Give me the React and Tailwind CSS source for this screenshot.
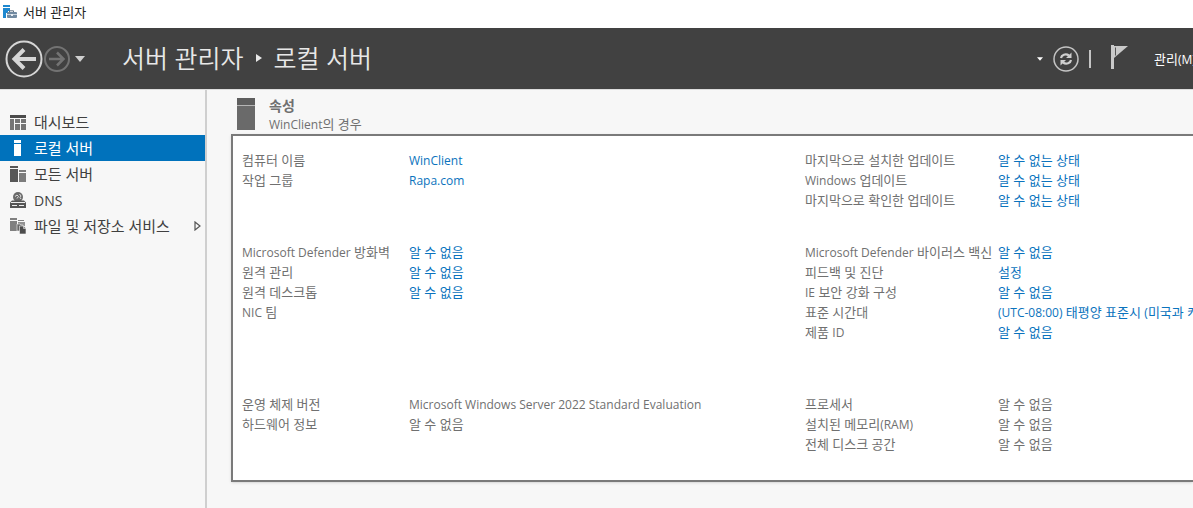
import clsx from "clsx";

const UNKNOWN = "알 수 없음";
const UNKNOWN_STATE = "알 수 없는 상태";

const navItems = [
  { label: "대시보드", icon: DashboardIcon },
  { label: "로컬 서버", icon: ServerIcon, active: true },
  { label: "모든 서버", icon: ServersIcon },
  { label: "DNS", icon: DnsIcon },
  { label: "파일 및 저장소 서비스", icon: StorageIcon, expandable: true },
];

const groups = [
  {
    className: "h-[92px]",
    left: [
      { label: "컴퓨터 이름", value: "WinClient", link: true },
      { label: "작업 그룹", value: "Rapa.com", link: true },
    ],
    right: [
      { label: "마지막으로 설치한 업데이트", value: UNKNOWN_STATE, link: true },
      { label: "Windows 업데이트", value: UNKNOWN_STATE, link: true },
      { label: "마지막으로 확인한 업데이트", value: UNKNOWN_STATE, link: true },
    ],
  },
  {
    className: "h-[152px]",
    left: [
      { label: "Microsoft Defender 방화벽", value: UNKNOWN, link: true },
      { label: "원격 관리", value: UNKNOWN, link: true },
      { label: "원격 데스크톱", value: UNKNOWN, link: true },
      { label: "NIC 팀", value: "" },
    ],
    right: [
      { label: "Microsoft Defender 바이러스 백신", value: UNKNOWN, link: true },
      { label: "피드백 및 진단", value: "설정", link: true },
      { label: "IE 보안 강화 구성", value: UNKNOWN, link: true },
      { label: "표준 시간대", value: "(UTC-08:00) 태평양 표준시 (미국과 캐나다)", link: true },
      { label: "제품 ID", value: UNKNOWN, link: true },
    ],
  },
  {
    className: "h-[86px]",
    left: [
      { label: "운영 체제 버전", value: "Microsoft Windows Server 2022 Standard Evaluation" },
      { label: "하드웨어 정보", value: UNKNOWN },
    ],
    right: [
      { label: "프로세서", value: UNKNOWN },
      { label: "설치된 메모리(RAM)", value: UNKNOWN },
      { label: "전체 디스크 공간", value: UNKNOWN },
    ],
  },
];

// Latin runs are set one size smaller than the Hangul around them
function Mixed({ text, size = "text-xs" }) {
  return text.split(/([\x21-\x7e]+(?: [\x21-\x7e]+)*)/).map((part, i) =>
    i % 2 ? (
      <span key={i} className={clsx("font-['Open_Sans',sans-serif]", size)}>
        {part}
      </span>
    ) : (
      part
    )
  );
}

function AppIcon() {
  return (
    <svg width="14" height="14" viewBox="0 0 14 14" aria-hidden="true">
      <path d="M0 0h7v2H0zM0 3h7v3H5v2H3v5H0z" fill="#1e88cf" />
      <path d="M6.5 7V5.8h4V7" fill="none" stroke="#5f7183" />
      <rect x="4" y="7" width="10" height="6" rx="1" fill="#7189a0" />
      <path d="M4 9.5h10" stroke="#c9d4de" />
      <path d="M8 9h2v2H8z" fill="#e8edf2" />
    </svg>
  );
}

function DashboardIcon() {
  return (
    <svg width="16" height="15" viewBox="0 0 16 15" aria-hidden="true">
      <path d="M0 0h16v3H0z" fill="#4b4b4b" />
      <path d="M0 4h4v11H0zM5 4h5v4H5zM11 4h5v4h-5zM5 9h5v6H5zM11 9h5v6h-5z" fill="#757575" />
    </svg>
  );
}

function ServerIcon() {
  return (
    <svg width="16" height="16" viewBox="0 0 16 16" aria-hidden="true">
      <path d="M4 0h7v3H4zM4 4h7v12H4z" fill="#fff" />
    </svg>
  );
}

function ServersIcon() {
  return (
    <svg width="16" height="16" viewBox="0 0 16 16" aria-hidden="true">
      <path d="M0 0h8v2H0zM0 3h8v13H0z" fill="#575757" />
      <path d="M9 4h7v2H9zM9 7h7v9H9z" fill="#7c7c7c" />
    </svg>
  );
}

function DnsIcon() {
  return (
    <svg width="16" height="16" viewBox="0 0 16 16" aria-hidden="true">
      <circle cx="8" cy="5" r="5" fill="#6b6b6b" />
      <path d="M5 4.5l2-1.500 1.500 1.500L7 6.500M9.500 2l1.500 2-1 1.500 1 1.500" fill="none" stroke="#dcdcdc" />
      <path d="M2 8.500h12l2 2V16H0v-5.500z" fill="#555" />
      <path d="M1 10.500h14M2 13.500h5M9 13.500h5" stroke="#eee" />
    </svg>
  );
}

function StorageIcon() {
  return (
    <svg width="17" height="16" viewBox="0 0 17 16" aria-hidden="true">
      <path d="M0 0h7v2H0zM0 3h7v10H0zM8 2h6v1H8z" fill="#808080" />
      <path d="M8 4h7v4H8z" fill="#929292" />
      <path d="M7 6h3l1 1h2v6H7z" fill="#666" stroke="#f7f7f7" strokeWidth=".6" />
      <path d="M9.500 8h4L16 10.500V16H9.500z" fill="#4c4c4c" stroke="#f7f7f7" strokeWidth=".6" />
      <path d="M13.500 8v2.500H16" fill="none" stroke="#ddd" strokeWidth=".7" />
    </svg>
  );
}

function BackIcon() {
  return (
    <svg width="38" height="38" viewBox="0 0 38 38" aria-hidden="true">
      <circle cx="19" cy="19" r="17.500" fill="none" stroke="#d6d6d6" strokeWidth="2" />
      <path d="M31 19H10M19 9.500L9.500 19l9.500 9.500" fill="none" stroke="#d6d6d6" strokeWidth="4" />
    </svg>
  );
}

function ForwardIcon() {
  return (
    <svg width="26" height="26" viewBox="0 0 26 26" aria-hidden="true">
      <circle cx="13" cy="13" r="12" fill="none" stroke="#737373" strokeWidth="2" />
      <path d="M5 13h14M13 6.500l6.500 6.500-6.500 6.500" fill="none" stroke="#737373" strokeWidth="2.500" />
    </svg>
  );
}

function RefreshIcon() {
  return (
    <svg width="26" height="26" viewBox="0 0 26 26" aria-hidden="true">
      <circle cx="13" cy="13" r="12" fill="none" stroke="#c4c4c4" strokeWidth="1.500" />
      <path d="M8 12c.5-3 4.500-5 8-2.500M18 14c-.5 3-4.500 5-8 2.500" fill="none" stroke="#d0d0d0" strokeWidth="2.200" />
      <path d="M18.500 6.500v5.500H13zM7.500 19.500V14H13z" fill="#d0d0d0" />
    </svg>
  );
}

function FlagIcon() {
  return (
    <svg width="17" height="24" viewBox="0 0 17 24" aria-hidden="true">
      <path d="M0 0h3v24H0z" fill="#c9c9c9" />
      <path d="M3 1h14L3 13z" fill="#c9c9c9" />
      <path d="M4.500 2.500v8" stroke="#555" />
    </svg>
  );
}

function Caret({ className }) {
  return (
    <svg viewBox="0 0 10 6" className={className} aria-hidden="true">
      <path d="M0 0h10L5 6z" fill="currentColor" />
    </svg>
  );
}

function Properties({ rows, labelClass }) {
  return (
    <dl>
      {rows.map((row) => (
        <div key={row.label} className="flex h-5 items-center">
          <dt className={clsx("shrink-0 text-[#707070]", labelClass)}>
            <Mixed text={row.label} />
          </dt>
          <dd className="text-[#707070]">
            {row.link ? (
              <a href="#" className="text-[#0b73bd] hover:underline">
                <Mixed text={row.value} />
              </a>
            ) : (
              <Mixed text={row.value} />
            )}
          </dd>
        </div>
      ))}
    </dl>
  );
}

function Sidebar() {
  return (
    <nav className="w-[207px] shrink-0 border-r-2 border-[#cfcfcf] pt-[19px]">
      {navItems.map(({ label, icon: Icon, active, expandable }) => (
        <a
          key={label}
          href="#"
          aria-current={active ? "page" : undefined}
          className={clsx(
            "flex h-[26px] items-center pr-1 pl-[10px] text-[15px]",
            active ? "bg-[#0072bc] text-white" : "text-[#404040]"
          )}
        >
          <span className="w-6 shrink-0">
            <Icon />
          </span>
          <span className="flex-1">
            <Mixed text={label} size="text-sm" />
          </span>
          {expandable && (
            <svg width="7" height="10" viewBox="0 0 7 10" aria-hidden="true">
              <path d="M1 1l5 4-5 4z" fill="none" stroke="#555" strokeWidth="1.200" />
            </svg>
          )}
        </a>
      ))}
    </nav>
  );
}

function Header() {
  return (
    <header className="flex h-[61px] items-center bg-[#414141] pl-[5px] text-[#e8e8e8]">
      <button type="button" aria-label="뒤로">
        <BackIcon />
      </button>
      <button type="button" aria-label="앞으로" className="ml-px">
        <ForwardIcon />
      </button>
      <button type="button" aria-label="기록" className="ml-[5px]">
        <Caret className="h-[6px] w-[10px] text-[#cfcfcf]" />
      </button>
      <h1 className="mb-[2px] ml-[37px] flex flex-1 items-center text-[25px] font-[350]">
        서버 관리자
        <svg width="6" height="8" viewBox="0 0 6 8" className="mx-3" aria-hidden="true">
          <path d="M0 0l6 4-6 4z" fill="currentColor" />
        </svg>
        로컬 서버
      </h1>
      <button type="button" aria-label="새로 고침 옵션">
        <Caret className="h-1 w-[6px] text-white" />
      </button>
      <button type="button" aria-label="새로 고침" className="ml-[10px]">
        <RefreshIcon />
      </button>
      <span className="ml-[10px] h-[18px] w-[2px] bg-[#c4c4c4]" />
      <button type="button" aria-label="알림" className="mb-1 ml-5">
        <FlagIcon />
      </button>
      <button type="button" className="ml-[26px] w-[39px] overflow-hidden text-left text-[13px] text-white">
        <Mixed text="관리(M)" />
      </button>
    </header>
  );
}

export default function App() {
  return (
    <div className="flex min-h-screen flex-col overflow-hidden bg-[#f7f7f7] font-['Open_Sans','Noto_Sans_CJK_KR',sans-serif] text-[13px] leading-5 whitespace-nowrap">
      <div className="flex h-7 items-center gap-[6px] bg-white pb-1 pl-[3px] text-[#222]">
        <AppIcon />
        <span>서버 관리자</span>
      </div>
      <Header />
      <div className="flex flex-1 border-t border-[#dcdcdc]">
        <Sidebar />
        <main className="min-w-0 flex-1 pt-2 pl-6">
          <div className="flex h-9 gap-[14px] pl-[6px]">
            <svg width="18" height="32" viewBox="0 0 18 32" aria-hidden="true">
              <path d="M0 0h18v7H0z" fill="#5e5e5e" />
              <path d="M0 8h18v24H0z" fill="#6a6a6a" />
              <path d="M0 7.500h18" stroke="#b5b5b5" />
            </svg>
            <div className="text-[#707070]">
              <h2 className="h-[18px] text-sm leading-4 font-bold">속성</h2>
              <p className="leading-4">
                <Mixed text="WinClient의 경우" />
              </p>
            </div>
          </div>
          <section className="overflow-hidden border-y-2 border-l-2 border-[#7a7a7a] bg-white pt-[14px] pl-[9px] shadow-sm">
            {groups.map((group) => (
              <div
                key={group.left[0].label}
                className={clsx("grid grid-cols-[minmax(0,563fr)_minmax(0,388fr)]", group.className)}
              >
                <Properties rows={group.left} labelClass="w-[167px]" />
                <Properties rows={group.right} labelClass="w-[193px]" />
              </div>
            ))}
          </section>
        </main>
      </div>
    </div>
  );
}
